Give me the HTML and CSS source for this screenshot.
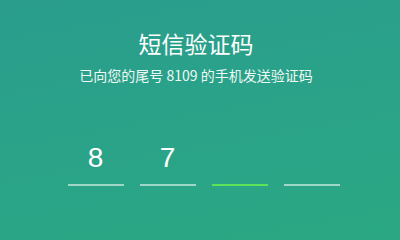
FILE: index.html
```html
<!DOCTYPE html>
<html lang="zh-CN">
<head>
<meta charset="utf-8">
<title>短信验证码</title>
<link rel="stylesheet" href="styles.css">
</head>
<body>
<main class="screen">
  <h1 class="title">短信验证码</h1>
  <p class="subtitle">已向您的尾号 8109 的手机发送验证码</p>
  <div class="code">
    <div class="cell"><span class="digit">8</span></div>
    <div class="cell"><span class="digit">7</span></div>
    <div class="cell active"><span class="digit"></span></div>
    <div class="cell"><span class="digit"></span></div>
  </div>
</main>
</body>
</html>
```
FILE: styles.css
```css
html {
  margin: 0;
  padding: 0;
  min-height: 100%;
  background: linear-gradient(170deg, #2a9d8d 0%, #2aa388 55%, #2ba883 100%) no-repeat;
  background-color: #2ba883;
}
body {
  margin: 0;
  padding: 0;
  width: 400px;
  height: 212px;
  overflow: hidden;
  font-family: "Noto Sans CJK SC", "Noto Sans", sans-serif;
  color: #ffffff;
}
.screen {
  display: flex;
  flex-direction: column;
  align-items: center;
  padding-top: 28px;
}
.title {
  margin: 0;
  padding-right: 8px;
  font-size: 23px;
  font-weight: 400;
  line-height: 30px;
}
.subtitle {
  margin: 7px 0 0;
  padding-right: 8px;
  font-size: 14px;
  line-height: 20px;
  color: #eef8f4;
}
.code {
  display: flex;
  gap: 16px;
  margin-top: 55px;
  padding-left: 7px;
}
.cell {
  width: 56px;
  display: flex;
  flex-direction: column;
  align-items: center;
  gap: 8px;
}
.cell::after {
  content: "";
  display: block;
  width: 56px;
  height: 2px;
  background: #9fd7c6;
}
.cell.active::after {
  background: #5ee25a;
}
.digit {
  display: block;
  height: 36px;
  line-height: 36px;
  font-family: "Liberation Sans", Arial, sans-serif;
  font-size: 28px;
  color: #ffffff;
}
```
